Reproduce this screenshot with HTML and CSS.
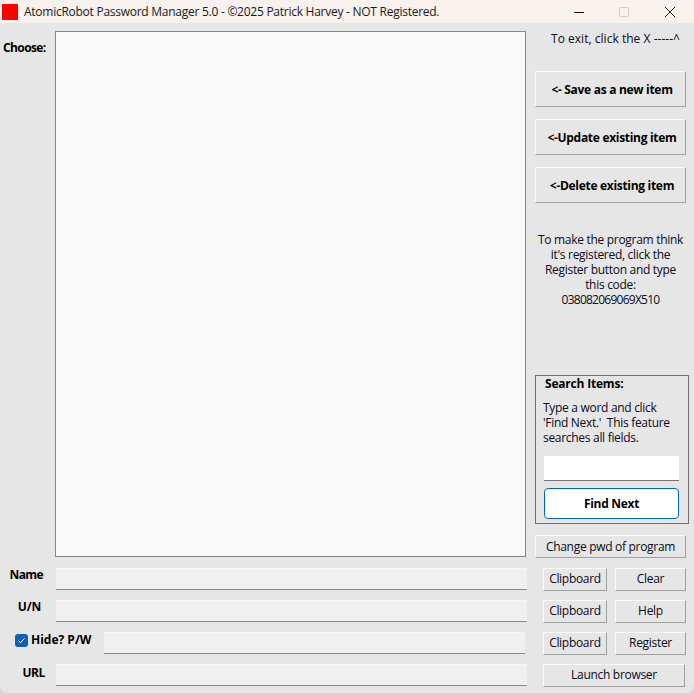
FILE: index.html
```html
<!DOCTYPE html>
<html lang="en">
<head>
<meta charset="utf-8">
<title>AtomicRobot Password Manager</title>
<link rel="stylesheet" href="styles.css">
</head>
<body>
<div class="window">
  <header class="titlebar">
    <span class="app-icon"></span>
    <span class="title">AtomicRobot Password Manager 5.0 - ©2025 Patrick Harvey - NOT Registered.</span>
    <div class="controls">
      <svg class="ctl" width="12" height="12" viewBox="0 0 12 12"><path d="M1 6.5h10" stroke="#111" stroke-width="1"/></svg>
      <svg class="ctl" width="12" height="12" viewBox="0 0 12 12"><rect x="0.5" y="1.5" width="9" height="9" rx="1.2" fill="none" stroke="#cfcfcf"/></svg>
      <svg class="ctl" width="12" height="12" viewBox="0 0 12 12"><path d="M1 1l10 10M11 1L1 11" stroke="#222" stroke-width="1"/></svg>
    </div>
  </header>
  <main class="content">
    <section class="top">
      <label class="choose-label">Choose:</label>
      <div class="listbox"></div>
      <aside class="side">
        <p class="exit-note">To exit, click the X -----^</p>
        <div class="big-buttons">
          <button class="btn big">&lt;- Save as a new item</button>
          <button class="btn big">&lt;-Update existing item</button>
          <button class="btn big">&lt;-Delete existing item</button>
        </div>
        <p class="reg-note">To make the program think<br>it's registered, click the<br>Register button and type<br>this code:<br><span class="code">038082069069X510</span></p>
        <fieldset class="search">
          <legend>Search Items:</legend>
          <p>Type a word and click<br>'Find Next.'&nbsp; This feature<br>searches all fields.</p>
          <input class="search-input" type="text">
          <button class="find">Find Next</button>
        </fieldset>
        <button class="btn change">Change pwd of program</button>
      </aside>
    </section>
    <section class="rows">
      <div class="row">
        <div class="row-label"><span class="lbl name">Name</span></div>
        <div class="field"></div>
        <div class="row-buttons"><button class="btn clip">Clipboard</button><button class="btn act">Clear</button></div>
      </div>
      <div class="row">
        <div class="row-label"><span class="lbl un">U/N</span></div>
        <div class="field"></div>
        <div class="row-buttons"><button class="btn clip">Clipboard</button><button class="btn act">Help</button></div>
      </div>
      <div class="row">
        <div class="row-label wide">
          <span class="check"><svg width="13" height="13" viewBox="0 0 13 13"><path d="M3.5 6.8l2 2 4-4.4" fill="none" stroke="#fff" stroke-width="1"/></svg></span>
          <span class="lbl hide">Hide? P/W</span>
        </div>
        <div class="field short"></div>
        <div class="row-buttons"><button class="btn clip">Clipboard</button><button class="btn act">Register</button></div>
      </div>
      <div class="row">
        <div class="row-label"><span class="lbl url">URL</span></div>
        <div class="field"></div>
        <div class="row-buttons"><button class="btn launch">Launch browser</button></div>
      </div>
    </section>
  </main>
</div>
</body>
</html>
```
FILE: styles.css
```css
* { box-sizing: border-box; }
html, body { margin: 0; padding: 0; width: 694px; height: 695px; background: #d8d5d4; overflow: hidden; }
body { font-family: "Open Sans", "Noto Sans", sans-serif; font-size: 12px; color: #0a0a20; }
.window { width: 694px; height: 693px; background: #e6e6e6; border-radius: 0 0 8px 8px; display: flex; flex-direction: column; overflow: hidden; }
.titlebar { height: 23px; background: #f8f1ee; display: flex; align-items: center; padding-left: 2px; flex: none; }
.app-icon { width: 16px; height: 16px; background: #fe0000; flex: none; }
.title { margin-left: 6px; font-size: 12px; color: #1a1a1a; white-space: nowrap; letter-spacing: -0.26px; }
.controls { margin-left: auto; display: flex; width: 121px; padding-right: 18px; justify-content: space-between; }
.content { flex: 1; display: flex; flex-direction: column; padding-top: 8px; }
.top { display: flex; height: 527px; }
.choose-label { width: 55px; font-weight: 700; padding: 8px 0 0 3px; letter-spacing: -0.6px; color: #000; }
.listbox { width: 471px; height: 526px; background: #f8f8f8; border: 1px solid #828790; }
.side { width: 154px; margin-left: 9px; }
p { margin: 0; }
.exit-note { text-align: right; padding-right: 9px; height: 40px; line-height: 16px; letter-spacing: 0.03px; }
.btn { font: inherit; color: inherit; background: #e6e6e6; border: 1px solid; border-color: #fbfbfb #a0a0a0 #a0a0a0 #fbfbfb; padding: 0; display: block; white-space: nowrap; letter-spacing: -0.3px; }
.big-buttons { display: flex; flex-direction: column; gap: 12px; }
.big { width: 151px; height: 36px; font-weight: 700; color: #000; letter-spacing: -0.3px; padding-left: 3px; }
.reg-note { text-align: center; width: 151px; margin-top: 29px; line-height: 15px; height: 77px; letter-spacing: -0.3px; }
.code { letter-spacing: -0.75px; }
.search { margin: 66px 0 0; width: 154px; height: 149px; border: 1px solid #6e6e6e; padding: 24px 8px 0; position: relative; display: flex; flex-direction: column; }
.search legend { position: absolute; left: 9px; top: -1px; padding: 0; font-weight: 700; color: #000; letter-spacing: -0.2px; }
.search p { line-height: 15px; letter-spacing: -0.3px; height: 48px; margin-left: -1px; }
.search-input { width: 135px; height: 25px; margin-top: 8px; border: 0; border-bottom: 1px solid #777; background: #fff; display: block; }
.find { width: 135px; height: 31px; margin-top: 7px; background: #fff; border: 1px solid #0067c0; border-radius: 4px; font: inherit; font-weight: 700; color: #000; letter-spacing: -0.3px; padding: 0; }
.change { width: 151px; height: 23px; margin-top: 11px; }
.rows { display: flex; flex-direction: column; gap: 10px; margin-top: 10px; }
.row { display: flex; height: 22px; }
.row-label { width: 56px; font-weight: 700; color: #000; flex: none; }
.row-label.wide { width: 104px; display: flex; align-items: flex-start; padding: 0 0 0 15px; gap: 3px; }
.lbl { letter-spacing: -0.2px; display: block; line-height: 16px; text-align: right; }
.name { padding-right: 13px; margin-top: -1px; letter-spacing: -0.6px; }
.un { padding-right: 15px; margin-top: -1px; }
.url { padding-right: 11px; margin-top: 1px; letter-spacing: -0.4px; }
.hide { margin-top: 0; letter-spacing: 0; }
.check { width: 13px; height: 13px; background: #0f5fb8; border-radius: 3px; display: block; margin-top: 2px; flex: none; }
.check svg { display: block; }
.field { width: 471px; height: 22px; background: #f0f0f0; border-bottom: 1px solid #8a8a8a; border-top: 1px solid #f6f6f6; flex: none; }
.field.short { width: 421px; }
.row-buttons { display: flex; gap: 8px; margin-left: 16px; }
.field.short + .row-buttons { margin-left: 18px; }
.clip, .act, .launch { height: 23px; padding-bottom: 2px; }
.clip { width: 64px; }
.act { width: 71px; }
.launch { width: 142px; }
```
